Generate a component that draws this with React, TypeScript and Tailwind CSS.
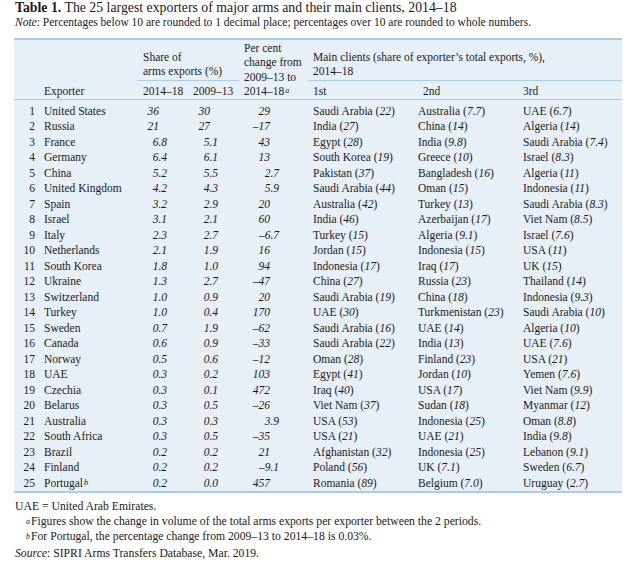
import React from "react";

type Row = [number, string, string, string, string, [string, string], [string, string], [string, string]];

const rows: Row[] = [
  [1, "United States", "36", "30", "29", ["Saudi Arabia", "22"], ["Australia", "7.7"], ["UAE", "6.7"]],
  [2, "Russia", "21", "27", "–17", ["India", "27"], ["China", "14"], ["Algeria", "14"]],
  [3, "France", "6.8", "5.1", "43", ["Egypt", "28"], ["India", "9.8"], ["Saudi Arabia", "7.4"]],
  [4, "Germany", "6.4", "6.1", "13", ["South Korea", "19"], ["Greece", "10"], ["Israel", "8.3"]],
  [5, "China", "5.2", "5.5", "2.7", ["Pakistan", "37"], ["Bangladesh", "16"], ["Algeria", "11"]],
  [6, "United Kingdom", "4.2", "4.3", "5.9", ["Saudi Arabia", "44"], ["Oman", "15"], ["Indonesia", "11"]],
  [7, "Spain", "3.2", "2.9", "20", ["Australia", "42"], ["Turkey", "13"], ["Saudi Arabia", "8.3"]],
  [8, "Israel", "3.1", "2.1", "60", ["India", "46"], ["Azerbaijan", "17"], ["Viet Nam", "8.5"]],
  [9, "Italy", "2.3", "2.7", "–6.7", ["Turkey", "15"], ["Algeria", "9.1"], ["Israel", "7.6"]],
  [10, "Netherlands", "2.1", "1.9", "16", ["Jordan", "15"], ["Indonesia", "15"], ["USA", "11"]],
  [11, "South Korea", "1.8", "1.0", "94", ["Indonesia", "17"], ["Iraq", "17"], ["UK", "15"]],
  [12, "Ukraine", "1.3", "2.7", "–47", ["China", "27"], ["Russia", "23"], ["Thailand", "14"]],
  [13, "Switzerland", "1.0", "0.9", "20", ["Saudi Arabia", "19"], ["China", "18"], ["Indonesia", "9.3"]],
  [14, "Turkey", "1.0", "0.4", "170", ["UAE", "30"], ["Turkmenistan", "23"], ["Saudi Arabia", "10"]],
  [15, "Sweden", "0.7", "1.9", "–62", ["Saudi Arabia", "16"], ["UAE", "14"], ["Algeria", "10"]],
  [16, "Canada", "0.6", "0.9", "–33", ["Saudi Arabia", "22"], ["India", "13"], ["UAE", "7.6"]],
  [17, "Norway", "0.5", "0.6", "–12", ["Oman", "28"], ["Finland", "23"], ["USA", "21"]],
  [18, "UAE", "0.3", "0.2", "103", ["Egypt", "41"], ["Jordan", "10"], ["Yemen", "7.6"]],
  [19, "Czechia", "0.3", "0.1", "472", ["Iraq", "40"], ["USA", "17"], ["Viet Nam", "9.9"]],
  [20, "Belarus", "0.3", "0.5", "–26", ["Viet Nam", "37"], ["Sudan", "18"], ["Myanmar", "12"]],
  [21, "Australia", "0.3", "0.3", "3.9", ["USA", "53"], ["Indonesia", "25"], ["Oman", "8.8"]],
  [22, "South Africa", "0.3", "0.5", "–35", ["USA", "21"], ["UAE", "21"], ["India", "9.8"]],
  [23, "Brazil", "0.2", "0.2", "21", ["Afghanistan", "32"], ["Indonesia", "25"], ["Lebanon", "9.1"]],
  [24, "Finland", "0.2", "0.2", "–9.1", ["Poland", "56"], ["UK", "7.1"], ["Sweden", "6.7"]],
  [25, "Portugal", "0.2", "0.0", "457", ["Romania", "89"], ["Belgium", "7.0"], ["Uruguay", "2.7"]],
];

const Client = ({ c }: { c: [string, string] }) => (
  <div className="pl-[5px] whitespace-nowrap">
    {c[0]} (<span className="italic">{c[1]}</span>)
  </div>
);

const Share = ({ v }: { v: string }) => (
  <div className={`text-right italic ${v.includes(".") ? "pr-[21px]" : "pr-[29px]"}`}>{v}</div>
);

const Change = ({ v }: { v: string }) => (
  <div className={`text-right italic ${v.includes(".") ? "pr-[29px]" : "pr-[38px]"}`}>{v}</div>
);

export default function App() {
  return (
    <div
      className="bg-white text-[#1c1a1b] w-[631px] h-[569px] overflow-hidden"
      style={{ fontFamily: '"Liberation Serif", "Times New Roman", serif' }}
    >
      <div className="pl-[15px] leading-[15px]">
        <div className="text-[13.8px]">
          <span className="font-bold">Table 1.</span> The 25 largest exporters of major arms and their main clients, 2014–18
        </div>
        <div className="text-[11.5px]">
          <span className="italic">Note</span>: Percentages below 10 are rounded to 1 decimal place; percentages over 10 are rounded to whole numbers.
        </div>
      </div>

      <div className="ml-[14px] mt-[8px] w-[608px] bg-[#e7f0f7] border-t-2 border-b-2 border-[#a9cde6] text-[11.5px]">
        {/* header */}
        <div className="flex h-[60px] border-b border-[#a9cde6] leading-[14.5px]">
          <div className="w-[123px] flex flex-col justify-end">
            <div className="pl-[30px] pb-[1px]">Exporter</div>
          </div>
          <div className="w-[102px] flex flex-col justify-end">
            <div className="border-b border-[#a9cde6] pl-[6px] pb-[1.5px]">
              <div>Share of</div>
              <div>arms exports (%)</div>
            </div>
            <div className="flex pt-[3px] h-[18px]">
              <div className="w-[51px] pl-[6px]">2014–18</div>
              <div className="w-[51px] pl-[5px]">2009–13</div>
            </div>
          </div>
          <div className="w-[69px] flex flex-col justify-end pl-[5px]">
            <div>Per cent</div>
            <div>change from</div>
            <div>2009–13 to</div>
            <div className="h-[15px]">
              2014–18<sup className="italic text-[8px] relative top-[-2px] ml-[1px]">a</sup>
            </div>
          </div>
          <div className="w-[314px] flex flex-col justify-end">
            <div className="border-b border-[#a9cde6] pl-[5px] pb-[1.5px]">
              <div>Main clients (share of exporter’s total exports, %),</div>
              <div>2014–18</div>
            </div>
            <div className="flex pt-[3px] h-[18px]">
              <div className="w-[105px] pl-[5px]">1st</div>
              <div className="w-[105px] pl-[10px]">2nd</div>
              <div className="w-[104px] pl-[5px]">3rd</div>
            </div>
          </div>
        </div>

        {/* body */}
        <div className="pt-[3.5px]">
          {rows.map((r) => (
            <div
              key={r[0]}
              className="grid grid-cols-[24px_99px_51px_51px_69px_105px_105px_104px] h-[15.5px] leading-[15.5px]"
            >
              <div className="text-right pr-[3px]">{r[0]}</div>
              <div className="pl-[6px] whitespace-nowrap">
                {r[1]}
                {r[0] === 25 && <sup className="italic text-[8px] relative top-[-2px] ml-[1px]">b</sup>}
              </div>
              <Share v={r[2]} />
              <Share v={r[3]} />
              <Change v={r[4]} />
              <Client c={r[5]} />
              <Client c={r[6]} />
              <Client c={r[7]} />
            </div>
          ))}
        </div>
      </div>

      <div className="pl-[15px] mt-[6px] text-[11.7px] leading-[15px]">
        <div>UAE = United Arab Emirates.</div>
        <div className="pl-[11px]">
          <sup className="italic text-[8px] relative top-[-1px] mr-[1px]">a</sup>Figures show the change in volume of the total arms exports per exporter between the 2 periods.
        </div>
        <div className="pl-[11px]">
          <sup className="italic text-[8px] relative top-[-1px] mr-[1px]">b</sup>For Portugal, the percentage change from 2009–13 to 2014–18 is 0.03%.
        </div>
        <div className="mt-[2px]">
          <span className="italic">Source</span>: SIPRI Arms Transfers Database, Mar. 2019.
        </div>
      </div>
    </div>
  );
}
